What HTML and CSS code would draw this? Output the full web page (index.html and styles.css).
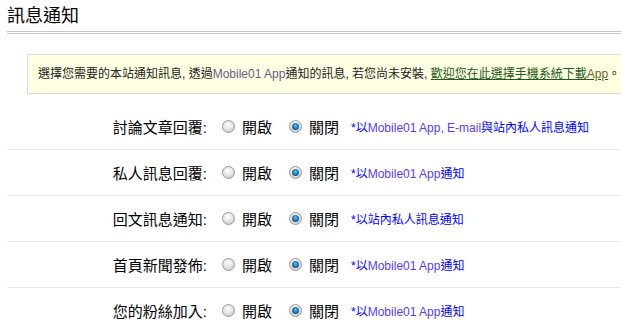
FILE: index.html
```html
<!DOCTYPE html>
<html lang="zh-Hant">
<head>
    <meta charset="UTF-8">
    <title>訊息通知</title>
    <link rel="stylesheet" href="styles.css">
</head>
<body>
    <div class="page">
        <h2 class="title">訊息通知</h2>

        <div class="notice">
            選擇您需要的本站通知訊息, 透過<span class="en">Mobile01 App</span>通知的訊息, 若您尚未安裝, <a href="#">歡迎您在此選擇手機系統下載<span class="en">App</span></a>。
        </div>

        <div class="settings">
            <div class="row">
                <span class="label">討論文章回覆:</span>
                <label class="opt"><span class="radio"></span>開啟</label>
                <label class="opt"><span class="radio checked"></span>關閉</label>
                <span class="note">*以<span class="en">Mobile01 App, E-mail</span>與站內私人訊息通知</span>
            </div>
            <div class="row">
                <span class="label">私人訊息回覆:</span>
                <label class="opt"><span class="radio"></span>開啟</label>
                <label class="opt"><span class="radio checked"></span>關閉</label>
                <span class="note">*以<span class="en">Mobile01 App</span>通知</span>
            </div>
            <div class="row">
                <span class="label">回文訊息通知:</span>
                <label class="opt"><span class="radio"></span>開啟</label>
                <label class="opt"><span class="radio checked"></span>關閉</label>
                <span class="note">*以站內私人訊息通知</span>
            </div>
            <div class="row">
                <span class="label">首頁新聞發佈:</span>
                <label class="opt"><span class="radio"></span>開啟</label>
                <label class="opt"><span class="radio checked"></span>關閉</label>
                <span class="note">*以<span class="en">Mobile01 App</span>通知</span>
            </div>
            <div class="row">
                <span class="label">您的粉絲加入:</span>
                <label class="opt"><span class="radio"></span>開啟</label>
                <label class="opt"><span class="radio checked"></span>關閉</label>
                <span class="note">*以<span class="en">Mobile01 App</span>通知</span>
            </div>
        </div>
    </div>
</body>
</html>
```

FILE: styles.css
```css
body {
    margin: 0;
    overflow: hidden;
    background-color: #fff;
    font-family: "Liberation Sans", "Noto Sans CJK TC", sans-serif;
    color: #000;
}

.page {
    width: 700px;
    padding-left: 7px;
}

.title {
    margin: 0;
    padding: 5px 0 4px;
    font-size: 18px;
    line-height: 22px;
    font-weight: normal;
    border-bottom: 3px double #c8c8c8;
}

.notice {
    margin: 20px 0 0 20px;
    padding: 0 10px;
    height: 38px;
    line-height: 38px;
    font-size: 12px;
    color: #222;
    background-color: #ffffe1;
    border: 1px solid #dcdcdc;
    white-space: nowrap;
}

.notice .en {
    color: #6a5c8c;
}

.notice a {
    color: #1d5a1d;
    text-decoration: underline;
}

.notice a .en {
    color: #5f6a2a;
}

.settings {
    margin-top: 10px;
}

.row {
    display: flex;
    align-items: center;
    height: 45px;
    border-bottom: 1px solid #e8e8e8;
    font-size: 15px;
    white-space: nowrap;
}

.label {
    width: 200px;
    text-align: right;
}

.opt {
    display: flex;
    align-items: center;
    margin-left: 15px;
}

.opt + .opt {
    margin-left: 17px;
}

.radio {
    position: relative;
    width: 11px;
    height: 11px;
    margin-right: 7px;
    border: 1px solid #9a9a9a;
    border-radius: 50%;
    background: radial-gradient(circle at 45% 35%, #ffffff 0%, #e6e6e6 45%, #bcbcbc 100%);
}

.radio.checked::after {
    content: "";
    position: absolute;
    top: 2px;
    left: 2px;
    width: 7px;
    height: 7px;
    border-radius: 50%;
    background: radial-gradient(circle at 50% 40%, #6fc3f0 0%, #1f78b8 45%, #0b3a66 100%);
}

.note {
    margin-left: 12px;
    font-size: 12px;
    color: #0000ff;
}

.note .en {
    color: #5a3cf0;
}
```
